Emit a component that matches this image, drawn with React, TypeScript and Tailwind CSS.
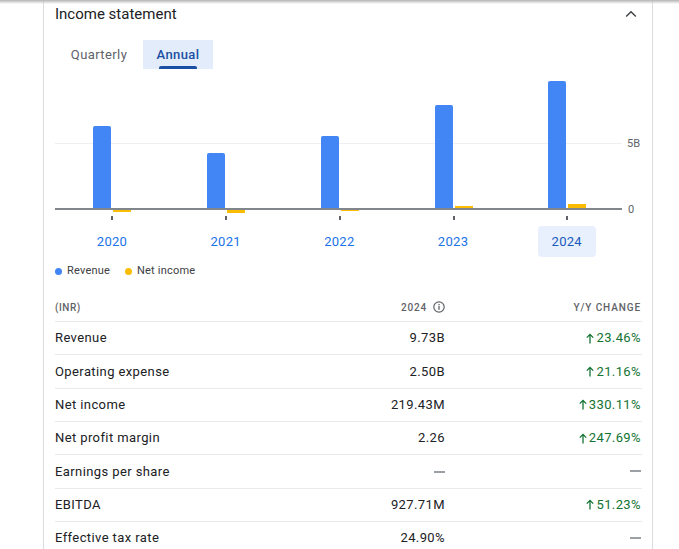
import React from "react";

const bars = [
  { x: 38, rev: 83, ni: -2 },
  { x: 152, rev: 56, ni: -3 },
  { x: 266, rev: 73, ni: -1 },
  { x: 380, rev: 104, ni: 2 },
  { x: 493, rev: 128, ni: 4 },
];

const years = ["2020", "2021", "2022", "2023", "2024"];

const rows = [
  { label: "Revenue", value: "9.73B", change: "23.46%" },
  { label: "Operating expense", value: "2.50B", change: "21.16%" },
  { label: "Net income", value: "219.43M", change: "330.11%" },
  { label: "Net profit margin", value: "2.26", change: "247.69%" },
  { label: "Earnings per share", value: "", change: "" },
  { label: "EBITDA", value: "927.71M", change: "51.23%" },
  { label: "Effective tax rate", value: "24.90%", change: "" },
];

const BASE = 139;

// bar with rounded top corners
function topBar(x: number, h: number, w = 18, r = 2) {
  const y = BASE - h;
  return `M${x},${BASE} L${x},${y + r} Q${x},${y} ${x + r},${y} L${x + w - r},${y} Q${x + w},${y} ${x + w},${y + r} L${x + w},${BASE} Z`;
}

function Chart() {
  return (
    <svg width="587" height="152" className="mt-[1px] block">
      <rect x="0" y="73" width="567" height="1" fill="#eeeff1" />
      {bars.map((b) => (
        <g key={b.x}>
          <path d={topBar(b.x, b.rev)} fill="#4285f4" />
          {b.ni >= 0 ? (
            <rect x={b.x + 20} y={138 - b.ni} width="18" height={b.ni} fill="#fbbc04" />
          ) : (
            <rect x={b.x + 20} y={BASE} width="18" height={-b.ni + 1} fill="#fbbc04" />
          )}
          <rect x={b.x + 18} y="146" width="2" height="4" fill="#5f6368" />
        </g>
      ))}
      <rect x="0" y="138" width="567" height="2" fill="#80868b" />
      <text x="572" y="77" fontSize="11" fill="#5f6368" fontFamily="Roboto, sans-serif">
        5B
      </text>
      <text x="573" y="143" fontSize="11" fill="#5f6368" fontFamily="Roboto, sans-serif">
        0
      </text>
    </svg>
  );
}

function UpArrow() {
  return (
    <svg width="8" height="11" viewBox="0 0 8 11" className="mr-[2px] inline-block">
      <path d="M4 10.5V1.5M0.8 4.6L4 1.4L7.2 4.6" stroke="#137333" strokeWidth="1.3" fill="none" />
    </svg>
  );
}

function Dash() {
  return <span className="inline-block h-[2px] w-[11px] bg-[#9aa0a6] align-middle" />;
}

export default function App() {
  return (
    <main className="relative min-h-screen bg-white font-['Roboto',sans-serif] text-[#202124]">
      <div className="pointer-events-none absolute inset-x-0 top-0 h-[4px] bg-gradient-to-b from-[#b4b4b4] to-transparent" />

      <div className="ml-[43px] w-[610px] border-x border-[#dadce0] pl-[11px] pr-[10px]">
        <div className="flex h-[28px] items-center justify-between">
          <h2 className="text-[15px] leading-none">Income statement</h2>
          <svg width="12" height="8" viewBox="0 0 12 8" className="mr-[5px]">
            <path d="M1.2 6.5L6 1.8L10.8 6.5" stroke="#3c4043" strokeWidth="1.4" fill="none" />
          </svg>
        </div>

        <div className="mt-[12px] flex h-[29px] text-[13px] tracking-[0.4px]">
          <div className="flex w-[88px] items-center justify-center text-[#5f6368]">Quarterly</div>
          <div className="relative flex w-[70px] items-center justify-center bg-[#e3ecfa] font-medium text-[#1a4fa3]">
            Annual
            <div className="absolute bottom-0 left-[16px] h-[3px] w-[38px] rounded-t-[2px] bg-[#1a4fa3]" />
          </div>
        </div>

        <Chart />

        <div className="mt-[4px] flex h-[31px] gap-[55.7px] pl-[28px] text-[13px] tracking-[0.3px]">
          {years.map((y) => (
            <div
              key={y}
              className={
                y === "2024"
                  ? "flex w-[58px] items-center justify-center rounded-[4px] bg-[#e8f0fe] text-[#185abc]"
                  : "flex w-[58px] items-center justify-center text-[#1a73e8]"
              }
            >
              {y}
            </div>
          ))}
        </div>

        <div className="mt-[6px] flex h-[16px] items-center text-[11px] tracking-[0.2px] text-[#3c4043]">
          <span className="h-[7px] w-[7px] rounded-full bg-[#4285f4]" />
          <span className="ml-[5px]">Revenue</span>
          <span className="ml-[15px] h-[7px] w-[7px] rounded-full bg-[#fbbc04]" />
          <span className="ml-[5px]">Net income</span>
        </div>

        <div className="mt-[14px] flex h-[28px] items-center text-[10px] font-medium text-[#5f6368]">
          <div className="flex-1 tracking-[0.5px]">(INR)</div>
          <div className="flex w-[120px] items-center justify-end tracking-[0.8px]">
            2024
            <svg width="12" height="12" viewBox="0 0 12 12" className="ml-[6px]">
              <circle cx="6" cy="6" r="5.2" stroke="#5f6368" strokeWidth="1.2" fill="none" />
              <rect x="5.35" y="5" width="1.3" height="3.8" fill="#5f6368" />
              <rect x="5.35" y="3" width="1.3" height="1.3" fill="#5f6368" />
            </svg>
          </div>
          <div className="w-[197px] pr-[1px] text-right tracking-[0.9px]">Y/Y CHANGE</div>
        </div>

        {rows.map((r) => (
          <div
            key={r.label}
            className="flex h-[33.33px] items-center border-t border-[#e8eaed] text-[13px] tracking-[0.4px]"
          >
            <div className="flex-1">{r.label}</div>
            <div className="w-[120px] text-right">{r.value ? r.value : <Dash />}</div>
            <div className="flex w-[197px] items-center justify-end pr-[1px] text-[#137333]">
              {r.change ? (
                <>
                  <UpArrow />
                  {r.change}
                </>
              ) : (
                <Dash />
              )}
            </div>
          </div>
        ))}
      </div>
    </main>
  );
}
